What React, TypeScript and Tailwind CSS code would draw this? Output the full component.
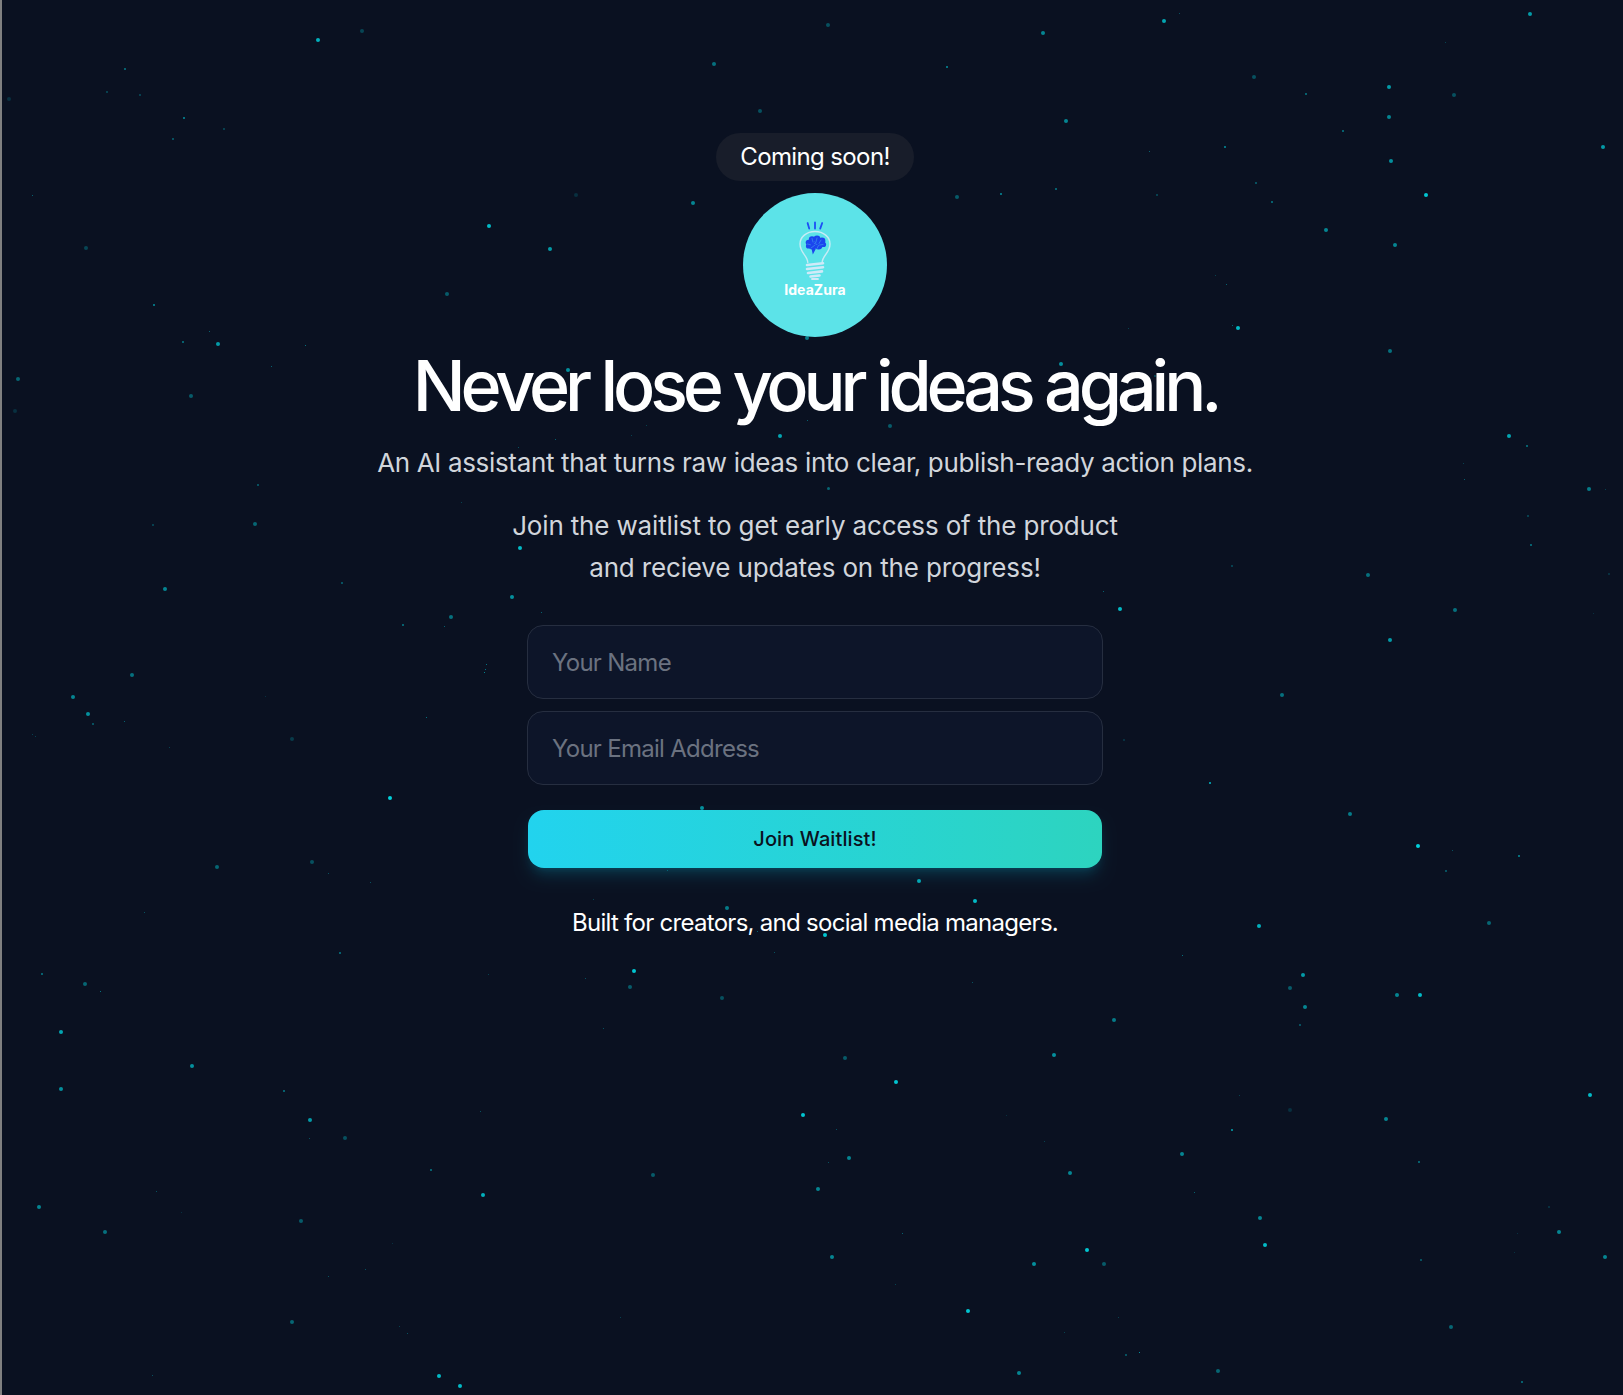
type Star = [number, number, number, number];

// x, y, diameter, alpha
const stars: Star[] = [
  [318,40,4,.75],[362,31,4,.25],[125,69,1.5,.5],[107,92,1.5,.3],[140,95,1.5,.3],[9,99,4,.15],[184,118,2,.6],[224,129,1.5,.3],[173,139,1.5,.4],[32,195,1,.5],[86,248,4,.25],[154,305,1.5,.6],[209,331,1,.5],[183,342,1.5,.5],[218,344,4,.65],[305,345,1,.6],[271,366,1,.5],[18,379,4,.4],[191,396,4,.35],
  [828,25,4,.3],[1043,33,4,.55],[714,64,4,.45],[947,67,1.5,.6],[760,111,4,.3],[1066,121,4,.55],[576,195,4,.15],[957,197,4,.35],[1001,194,1.5,.6],[1056,189,1.5,.5],
  [489,226,4,.8],[550,249,4,.65],[693,203,4,.55],[447,294,4,.35],[807,338,4,.5],
  [1164,21,4,.7],[1179,13,1,.4],[1530,14,4,.65],[1445,42,1,.3],[1254,77,4,.3],[1306,94,1.5,.5],[1389,87,4,.65],[1454,95,4,.3],[1389,117,4,.55],[1343,131,1.5,.5],[1149,151,1,.5],[1225,147,1.5,.6],[1391,161,4,.6],[1603,147,4,.65],[1256,183,1.5,.4],[1157,195,1.5,.3],[1272,202,1.5,.5],[1426,195,4,.85],[1326,230,4,.55],[1395,245,4,.55],[1215,275,1,.3],[1226,284,1,.5],[1128,328,1,.3],[1232,325,1,.5],[1238,328,4,.8],[1390,351,4,.45],[1155,376,1.5,.3],[1509,436,4,.7],[1527,446,1.5,.5],[1463,463,1,.3],[1464,479,1,.5],[1589,489,4,.5],[1605,489,1,.3],
  [1528,516,1.5,.3],[1531,545,1.5,.5],[1232,566,1.5,.3],[1103,591,1,.5],[1120,609,4,.8],[1368,575,4,.45],[1609,574,1.5,.2],[1455,610,4,.45],[1593,613,1,.2],[1390,640,4,.65],[1282,695,4,.45],[1124,740,1.5,.2],[1210,783,1.5,.8],[1350,814,4,.5],[1418,846,4,.9],[1452,850,1,.4],[1519,856,1.5,.6],[1446,871,1.5,.4],[1489,923,4,.4],[1259,926,4,.75],[1182,955,1,.6],[1303,975,4,.65],[1290,988,4,.35],[1397,995,4,.55],[1420,995,4,.8],
  [1305,1007,4,.55],[1114,1020,4,.5],[1300,1025,1.5,.4],[1590,1095,4,.8],[1239,1095,1,.3],[1290,1110,4,.15],[1386,1119,4,.55],[1232,1130,1.5,.7],[1182,1154,4,.55],[1419,1162,1.5,.5],[1194,1192,1,.5],[1260,1218,4,.55],[1549,1207,1.5,.2],[1517,1233,1,.2],[1265,1245,4,.8],[1559,1232,4,.55],[1605,1257,4,.55],[1514,1252,1,.2],[1421,1260,1.5,.4],[1104,1264,4,.35],[1118,1317,1,.3],[1451,1327,4,.4],[1139,1352,1,.8],[1126,1355,1.5,.4],[1218,1371,4,.4],[1522,1382,1.5,.5],
  [15,411,4,.15],[258,485,1.5,.4],[153,525,1.5,.3],[255,524,4,.4],[461,502,1,.3],[165,589,4,.55],[342,583,1.5,.4],[403,625,1.5,.5],[451,617,4,.45],[444,626,1,.5],[486,664,1,.6],[485,669,1,.6],[484,672,1,.7],[132,675,4,.45],[73,697,4,.55],[265,696,1,.2],[88,714,4,.6],[93,724,1.5,.4],[124,721,1,.5],[32,734,1,.3],[35,736,1,.3],[426,717,1,.6],[292,739,4,.2],[169,747,1,.3],[390,798,4,.9],[217,867,4,.4],[312,862,4,.3],[328,873,1,.4],[370,882,1,.4],
  [144,912,1,.4],[340,953,1.5,.5],[42,974,1.5,.5],[85,984,4,.4],[100,991,1,.6],[488,974,1,.3],[61,1032,4,.7],[192,1066,4,.6],[61,1089,4,.6],[284,1091,2,.5],[310,1120,4,.65],[345,1138,4,.3],[480,1111,1,.4],[309,1138,1,.4],[431,1170,1.5,.5],[483,1195,4,.75],[156,1191,1,.4],[181,1212,1,.2],[39,1207,4,.55],[105,1232,4,.45],[301,1221,4,.35],[392,1243,1,.2],[365,1269,1,.4],[328,1276,1,.4],[292,1322,4,.4],[399,1326,1,.3],[407,1333,1,.4],[152,1375,1,.4],[439,1376,4,.8],[460,1386,4,.8],
  [727,908,4,.5],[975,901,4,.8],[825,935,4,.85],[757,931,1,.5],[774,952,1,.4],[634,971,4,.85],[585,978,1,.4],[630,987,4,.35],[722,998,4,.3],[603,1028,1,.4],[972,982,1,.4],[845,1058,4,.35],[896,1082,4,.85],[803,1115,4,.85],[836,1129,1,.4],[1054,1055,4,.6],[1006,1115,1,.2],[1044,1141,1,.3],[849,1158,4,.55],[828,1162,1,.4],[653,1175,4,.35],[818,1189,4,.55],[1070,1173,4,.55],[902,1233,1,.5],[1087,1250,4,.85],[832,1257,4,.55],[1034,1264,4,.6],[895,1284,1,.3],[620,1317,1,.3],[968,1311,4,.85],[1064,1332,1,.3],[1019,1373,4,.55],
  [568,370,4,.6],[646,425,1,.3],[631,435,1,.3],[555,439,1,.5],[518,447,1,.4],[780,436,4,.7],[807,420,1,.5],[520,548,4,.8],[512,597,4,.6],[714,528,1,.5],[702,808,4,.6],[541,612,1,.5],[667,870,1,.4],[593,899,1,.3],[1061,364,4,.6],[890,426,4,.35],[828,488,3,.4],[919,881,4,.7],
];

const Bulb = () => (
  <svg width="50" height="67" viewBox="0 0 50 67" fill="none" strokeLinecap="round">
    <g stroke="#1d4ef5" strokeWidth="1.8">
      <path d="M17.6 8l1.6 5.600" />
      <path d="M25 7.400V13.600" />
      <path d="M32.200 8l-2 5.600" />
    </g>
    <path
      d="M17.800 47.500c-.2-7-7.800-9.500-7.800-18.500C10 22 16.500 16.500 25 16.500S40 22 40 29c0 9-7.800 11.500-7.800 18.500"
      stroke="#c6ecf6"
      strokeWidth="1.400"
    />
    <g stroke="#cfeaf8" strokeWidth="2.600">
      <path d="M17 50l16-1.800" />
      <path d="M17 54l16-1.800" />
      <path d="M18 58l14-1.600" />
      <path d="M20.500 61.500l9-1" />
    </g>
    <path d="M22 64h6" stroke="#cfeaf8" strokeWidth="1.800" />
    <g fill="#1b45ee">
      <circle cx="18.500" cy="27.500" r="2.800" />
      <circle cx="22" cy="24.500" r="3.200" />
      <circle cx="27" cy="24" r="3.400" />
      <circle cx="32" cy="26" r="3.400" />
      <circle cx="33.500" cy="29.500" r="2.600" />
      <circle cx="28.500" cy="30.500" r="4" />
      <circle cx="22.500" cy="30.500" r="4" />
      <circle cx="18.500" cy="31" r="2.600" />
      <path d="M21.500 33.500h4.500l-3.200 6z" />
    </g>
    <g stroke="#5ce3e8" strokeWidth=".5" opacity=".7">
      <path d="M17.500 29l3 .8M22 23.500l1 3.500M27 23l-1 4M31 25l-2 3.500M33 29.500l-3.500.5M21 33l3.500-2.500M27 33.500l1.500-3M24.500 28.500l2.500 1" />
    </g>
  </svg>
);

export default function App() {
  return (
    <div className="relative flex h-[1395px] flex-col items-center overflow-hidden border-l-2 border-[#808080] bg-[#0a1121] pl-[5px] pt-[133px] font-['Inter',sans-serif]">
      <div className="absolute inset-0 -left-[2px]">
        {stars.map(([x, y, d, a], i) => (
          <span
            key={i}
            className="absolute rounded-full bg-[#00e5f0]"
            style={{ left: x - d / 2, top: y - d / 2, width: d, height: d, opacity: a }}
          />
        ))}
      </div>

      <div className="relative flex w-full flex-col items-center">
        <span className="flex h-12 w-[198px] items-center justify-center rounded-full bg-[#181d2a] text-[24px] tracking-[-0.026em] text-white">
          Coming soon!
        </span>

        <div className="mt-3 flex h-36 w-36 flex-col items-center rounded-full bg-[#5ce3e8] pt-[22px]">
          <Bulb />
          <span className="text-[14px] leading-4 font-bold tracking-[0.005em] text-white">IdeaZura</span>
        </div>

        <h1 className="mt-[11px] text-[70px] leading-[76px] font-medium tracking-[-0.073em] text-white">
          Never lose your ideas again.
        </h1>
        <p className="mt-[18px] text-[26px] leading-[42px] tracking-[-0.013em] text-[#d1d5db]">
          An AI assistant that turns raw ideas into clear, publish-ready action plans.
        </p>
        <p className="mt-[21px] text-center text-[26px] leading-[42px] tracking-[-0.006em] text-[#d1d5db]">
          Join the waitlist to get early access of the product
          <br />
          and recieve updates on the progress!
        </p>

        <form className="mt-[36px] flex w-[576px] flex-col">
          <input
            placeholder="Your Name"
            className="h-[74px] rounded-2xl border border-[#262e40] bg-[#0d1529] px-6 text-[24px] tracking-[-0.03em] text-white outline-none placeholder:text-[#6b7280]"
          />
          <input
            placeholder="Your Email Address"
            className="mt-3 h-[74px] rounded-2xl border border-[#262e40] bg-[#0d1529] px-6 text-[24px] tracking-[-0.03em] text-white outline-none placeholder:text-[#6b7280]"
          />
          <button
            type="button"
            className="mx-px mt-[25px] h-[58px] rounded-2xl bg-gradient-to-r from-[#22d3ee] to-[#2dd4bf] text-[20px] font-medium tracking-[0.005em] text-[#0a1120] shadow-lg shadow-cyan-500/20"
          >
            Join Waitlist!
          </button>
        </form>

        <p className="mt-[39px] text-[24px] leading-8 tracking-[-0.03em] text-white">
          Built for creators, and social media managers.
        </p>
      </div>
    </div>
  );
}
